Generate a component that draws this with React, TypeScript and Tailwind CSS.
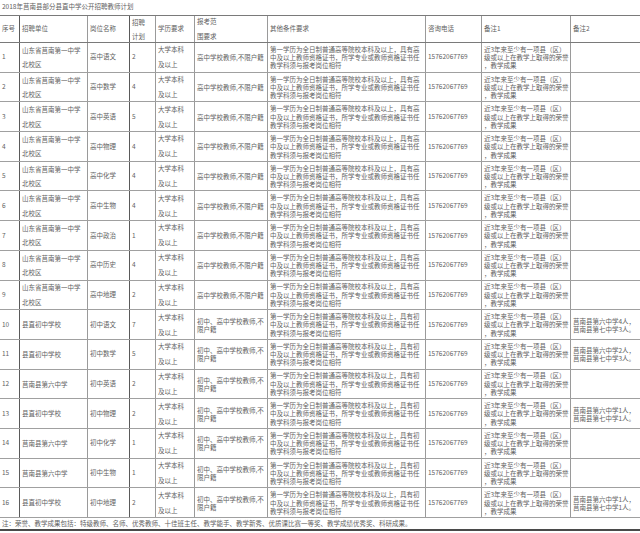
import React from "react";

type Row = {
  no: string;
  unit: string[];
  pos: string;
  plan: string;
  range: string[];
  junior: boolean;
  note2?: string[];
};

const senior = (no: string, pos: string, plan: string): Row => ({
  no,
  unit: ["山东省莒南第一中学", "北校区"],
  pos,
  plan,
  range: ["高中学校教师,不限户籍"],
  junior: false,
});

const junior = (no: string, unit: string, pos: string, plan: string, note2?: string[]): Row => ({
  no,
  unit: [unit],
  pos,
  plan,
  range: ["初中、高中学校教师,不", "限户籍"],
  junior: true,
  note2,
});

const rows: Row[] = [
  senior("1", "高中语文", "2"),
  senior("2", "高中数学", "4"),
  senior("3", "高中英语", "5"),
  senior("4", "高中物理", "4"),
  senior("5", "高中化学", "4"),
  senior("6", "高中生物", "4"),
  senior("7", "高中政治", "1"),
  senior("8", "高中历史", "4"),
  senior("9", "高中地理", "2"),
  junior("10", "县直初中学校", "初中语文", "7", ["莒南县第六中学4人，", "莒南县第七中学3人。"]),
  junior("11", "县直初中学校", "初中数学", "5", ["莒南县第六中学2人，", "莒南县第七中学3人。"]),
  junior("12", "莒南县第六中学", "初中英语", "2"),
  junior("13", "县直初中学校", "初中物理", "2", ["莒南县第六中学1人，", "莒南县第七中学1人。"]),
  junior("14", "莒南县第六中学", "初中化学", "1"),
  junior("15", "莒南县第六中学", "初中生物", "1"),
  junior("16", "县直初中学校", "初中地理", "2", ["莒南县第六中学1人，", "莒南县第七中学1人。"]),
];

const grid =
  "grid grid-cols-[20px_68px_42px_26px_39px_73px_158px_56px_89px_69px]";

function Lines({ lines, lead }: { lines: string[]; lead: string }) {
  return (
    <div className={lead}>
      {lines.map((l, i) => (
        <div key={i} className="whitespace-nowrap">
          {l}
        </div>
      ))}
    </div>
  );
}

export default function App() {
  const cellL = "border-r border-[#9a9a9a] flex items-center pl-[2px] overflow-hidden";
  const cellD = "border-r border-[#5a5a5a] flex items-center pl-[2px] overflow-hidden";
  const cellN = "flex items-center pl-[2px] overflow-hidden";
  return (
    <div
      className="w-[640px] h-[533px] bg-white overflow-hidden text-[6.5px] text-[#626262]"
      style={{ fontFamily: '"Noto Sans CJK SC", "Noto Sans", sans-serif' }}
    >
      <div className="h-[15px] pl-[2px] leading-[12px] whitespace-nowrap">
        2018年莒南县部分县直中学公开招聘教师计划
      </div>
      <div className={`${grid} h-[28px] border-t border-b border-[#7a7a7a]`}>
        <div className={cellD}>序号</div>
        <div className={cellL}>招聘单位</div>
        <div className={cellD}>岗位名称</div>
        <div className={cellL}>
          <Lines lines={["招聘", "计划"]} lead="leading-[14.5px]" />
        </div>
        <div className={cellL}>学历要求</div>
        <div className={cellL}>
          <Lines lines={["报考范", "围要求"]} lead="leading-[15px]" />
        </div>
        <div className={cellL}>其他条件要求</div>
        <div className={cellL}>咨询电话</div>
        <div className={cellL}>备注1</div>
        <div className={cellN}>备注2</div>
      </div>
      {rows.map((r) => (
        <div key={r.no} className={`${grid} h-[29.7px] border-b border-[#a0a0a0]`}>
          <div className={cellD}>{r.no}</div>
          <div className={cellL}>
            <Lines lines={r.unit} lead="leading-[14.5px]" />
          </div>
          <div className={cellD}>{r.pos}</div>
          <div className={cellL}>{r.plan}</div>
          <div className={cellL}>
            <Lines lines={["大学本科", "及以上"]} lead="leading-[15px]" />
          </div>
          <div className={cellL}>
            <Lines lines={r.range} lead="leading-[8px]" />
          </div>
          <div className={cellL}>
            <Lines
              lines={[
                r.junior
                  ? "第一学历为全日制普通高等院校本科及以上，具有初"
                  : "第一学历为全日制普通高等院校本科及以上，具有高",
                "中及以上教师资格证书，所学专业或教师资格证书任",
                "教学科须与报考岗位相符",
              ]}
              lead="leading-[8.3px]"
            />
          </div>
          <div className={cellL}>15762067769</div>
          <div className={cellL}>
            <Lines
              lines={["近3年来至少有一项县（区）", "级或以上在教学上取得的荣誉", "，教学成果"]}
              lead="leading-[8.3px]"
            />
          </div>
          <div className={cellN}>
            {r.note2 ? <Lines lines={r.note2} lead="leading-[8px]" /> : null}
          </div>
        </div>
      ))}
      <div className="h-[13px] pl-[2px] flex items-center whitespace-nowrap border-b-2 border-[#4a4a4a]">
        注：荣誉、教学成果包括：特级教师、名师、优秀教师、十佳班主任、教学能手、教学新秀、优质课比赛一等奖、教学成绩优秀奖、科研成果。
      </div>
    </div>
  );
}
